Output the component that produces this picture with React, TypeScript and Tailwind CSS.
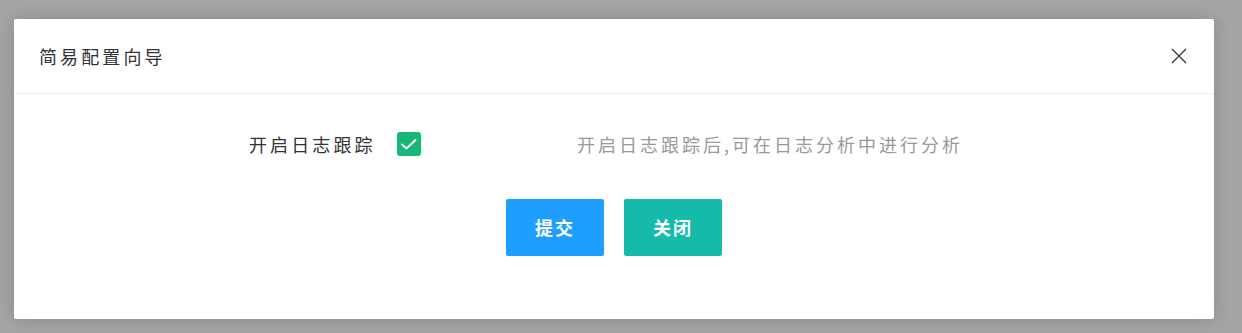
import React, { useState } from 'react';

const font = { fontFamily: '"Noto Sans CJK SC", "Noto Sans", sans-serif' };

export default function App() {
  const [checked, setChecked] = useState(true);

  return (
    <div className="w-[1242px] h-[333px] bg-[#a5a5a5] pt-[19px] pl-[14px]" style={font}>
      <div className="w-[1200px] h-[300px] bg-white rounded-[2px] shadow-[0_0_18px_rgba(0,0,0,0.18)] flex flex-col">
        {/* Header */}
        <div className="h-[75px] border-b border-[#eeeeee] flex items-center justify-between pl-[25px] pr-[27px]">
          <span className="text-[18px] tracking-[3.1px] text-[#333] leading-none">简易配置向导</span>
          <button className="w-[16px] h-[16px] text-[#333]">
            <svg viewBox="0 0 16 16" width="16" height="16" fill="none" stroke="currentColor" strokeWidth="1.3">
              <path d="M1 1L15 15M15 1L1 15" />
            </svg>
          </button>
        </div>

        {/* Body */}
        <div className="flex flex-col">
          <div className="flex items-center h-[24px] mt-[38px] pl-[235px]">
            <span className="text-[18px] tracking-[3.1px] text-[#333] leading-none w-[148px]">开启日志跟踪</span>
            <button
              onClick={() => setChecked(!checked)}
              className={`w-[24px] h-[24px] rounded-[3px] flex items-center justify-center ${checked ? 'bg-[#16b777]' : 'border border-[#d2d2d2] bg-white'}`}
            >
              {checked && (
                <svg viewBox="0 0 24 24" width="24" height="24" fill="none" stroke="white" strokeWidth="1.8" strokeLinecap="round" strokeLinejoin="round">
                  <path d="M5 12.5L9.5 16.5L18.5 8" />
                </svg>
              )}
            </button>
            <span className="ml-[156px] text-[18px] tracking-[3px] text-[#999] leading-none">开启日志跟踪后,可在日志分析中进行分析</span>
          </div>

          <div className="flex justify-center gap-[20px] mt-[43px]">
            <button className="w-[98px] h-[57px] rounded-[2px] bg-[#1e9fff] text-white text-[18px] font-bold tracking-[2px]">提交</button>
            <button className="w-[98px] h-[57px] rounded-[2px] bg-[#16baaa] text-white text-[18px] font-bold tracking-[2px]">关闭</button>
          </div>
        </div>
      </div>
    </div>
  );
}
